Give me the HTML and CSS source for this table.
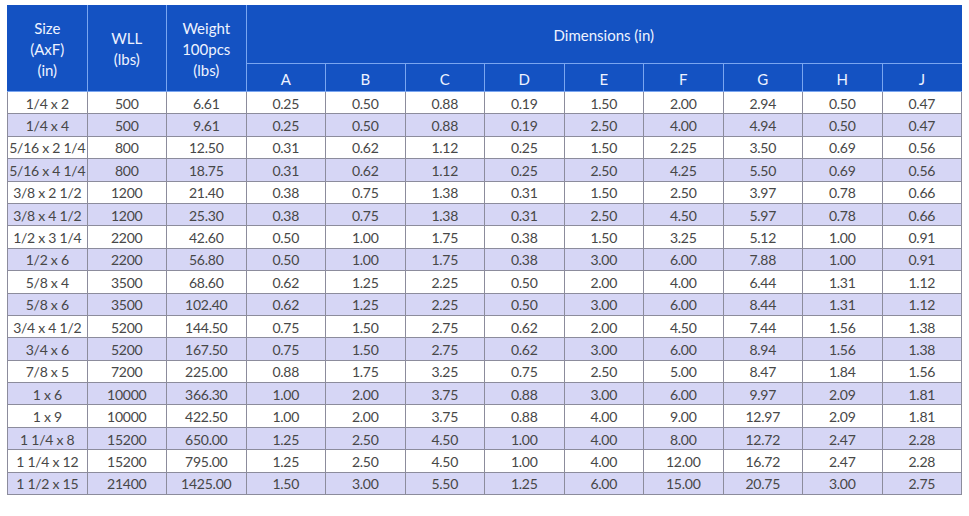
FILE: index.html
```html
<!DOCTYPE html>
<html>
<head>
<meta charset="utf-8">
<link rel="stylesheet" href="styles.css">
</head>
<body>
<table class="spec">
<colgroup>
<col><col><col><col><col><col><col><col><col><col><col><col>
</colgroup>
<thead>
<tr class="h1">
<th rowspan="2" class="stack">Size<br>(AxF)<br>(in)</th>
<th rowspan="2" class="stack">WLL<br>(lbs)</th>
<th rowspan="2" class="stack">Weight<br>100pcs<br>(lbs)</th>
<th colspan="9">Dimensions (in)</th>
</tr>
<tr class="h2">
<th>A</th><th>B</th><th>C</th><th>D</th><th>E</th><th>F</th><th>G</th><th>H</th><th>J</th>
</tr>
</thead>
<tbody>
<tr><td>1/4 x 2</td><td>500</td><td>6.61</td><td>0.25</td><td>0.50</td><td>0.88</td><td>0.19</td><td>1.50</td><td>2.00</td><td>2.94</td><td>0.50</td><td>0.47</td></tr>
<tr><td>1/4 x 4</td><td>500</td><td>9.61</td><td>0.25</td><td>0.50</td><td>0.88</td><td>0.19</td><td>2.50</td><td>4.00</td><td>4.94</td><td>0.50</td><td>0.47</td></tr>
<tr><td>5/16 x 2 1/4</td><td>800</td><td>12.50</td><td>0.31</td><td>0.62</td><td>1.12</td><td>0.25</td><td>1.50</td><td>2.25</td><td>3.50</td><td>0.69</td><td>0.56</td></tr>
<tr><td>5/16 x 4 1/4</td><td>800</td><td>18.75</td><td>0.31</td><td>0.62</td><td>1.12</td><td>0.25</td><td>2.50</td><td>4.25</td><td>5.50</td><td>0.69</td><td>0.56</td></tr>
<tr><td>3/8 x 2 1/2</td><td>1200</td><td>21.40</td><td>0.38</td><td>0.75</td><td>1.38</td><td>0.31</td><td>1.50</td><td>2.50</td><td>3.97</td><td>0.78</td><td>0.66</td></tr>
<tr><td>3/8 x 4 1/2</td><td>1200</td><td>25.30</td><td>0.38</td><td>0.75</td><td>1.38</td><td>0.31</td><td>2.50</td><td>4.50</td><td>5.97</td><td>0.78</td><td>0.66</td></tr>
<tr><td>1/2 x 3 1/4</td><td>2200</td><td>42.60</td><td>0.50</td><td>1.00</td><td>1.75</td><td>0.38</td><td>1.50</td><td>3.25</td><td>5.12</td><td>1.00</td><td>0.91</td></tr>
<tr><td>1/2 x 6</td><td>2200</td><td>56.80</td><td>0.50</td><td>1.00</td><td>1.75</td><td>0.38</td><td>3.00</td><td>6.00</td><td>7.88</td><td>1.00</td><td>0.91</td></tr>
<tr><td>5/8 x 4</td><td>3500</td><td>68.60</td><td>0.62</td><td>1.25</td><td>2.25</td><td>0.50</td><td>2.00</td><td>4.00</td><td>6.44</td><td>1.31</td><td>1.12</td></tr>
<tr><td>5/8 x 6</td><td>3500</td><td>102.40</td><td>0.62</td><td>1.25</td><td>2.25</td><td>0.50</td><td>3.00</td><td>6.00</td><td>8.44</td><td>1.31</td><td>1.12</td></tr>
<tr><td>3/4 x 4 1/2</td><td>5200</td><td>144.50</td><td>0.75</td><td>1.50</td><td>2.75</td><td>0.62</td><td>2.00</td><td>4.50</td><td>7.44</td><td>1.56</td><td>1.38</td></tr>
<tr><td>3/4 x 6</td><td>5200</td><td>167.50</td><td>0.75</td><td>1.50</td><td>2.75</td><td>0.62</td><td>3.00</td><td>6.00</td><td>8.94</td><td>1.56</td><td>1.38</td></tr>
<tr><td>7/8 x 5</td><td>7200</td><td>225.00</td><td>0.88</td><td>1.75</td><td>3.25</td><td>0.75</td><td>2.50</td><td>5.00</td><td>8.47</td><td>1.84</td><td>1.56</td></tr>
<tr><td>1 x 6</td><td>10000</td><td>366.30</td><td>1.00</td><td>2.00</td><td>3.75</td><td>0.88</td><td>3.00</td><td>6.00</td><td>9.97</td><td>2.09</td><td>1.81</td></tr>
<tr><td>1 x 9</td><td>10000</td><td>422.50</td><td>1.00</td><td>2.00</td><td>3.75</td><td>0.88</td><td>4.00</td><td>9.00</td><td>12.97</td><td>2.09</td><td>1.81</td></tr>
<tr><td>1 1/4 x 8</td><td>15200</td><td>650.00</td><td>1.25</td><td>2.50</td><td>4.50</td><td>1.00</td><td>4.00</td><td>8.00</td><td>12.72</td><td>2.47</td><td>2.28</td></tr>
<tr><td>1 1/4 x 12</td><td>15200</td><td>795.00</td><td>1.25</td><td>2.50</td><td>4.50</td><td>1.00</td><td>4.00</td><td>12.00</td><td>16.72</td><td>2.47</td><td>2.28</td></tr>
<tr><td>1 1/2 x 15</td><td>21400</td><td>1425.00</td><td>1.50</td><td>3.00</td><td>5.50</td><td>1.25</td><td>6.00</td><td>15.00</td><td>20.75</td><td>3.00</td><td>2.75</td></tr>
</tbody>
</table>
</body>
</html>
```
FILE: styles.css
```css
html, body {
  margin: 0;
  padding: 0;
  background: #ffffff;
}
body {
  padding: 5px 0 0 7px;
  font-family: "Lato", "Noto Sans", sans-serif;
}
.spec {
  border-collapse: collapse;
  table-layout: fixed;
  width: 954px;
  font-size: 14px;
  letter-spacing: -0.25px;
  color: #474747;
}
.spec col {
  width: 79.5px;
}
.spec th {
  background: #1452c2;
  color: #eef2ff;
  font-size: 15px;
  letter-spacing: 0;
  font-weight: 400;
  border: 1px solid #7aa6f0;
  padding: 0;
  line-height: 20px;
  text-align: center;
  vertical-align: middle;
  white-space: nowrap;
}
.spec th.stack {
  line-height: 21px;
  padding-top: 1px;
}
.spec thead tr:first-child th {
  border-top-color: #1452c2;
}
.spec thead tr:first-child th:first-child {
  border-left-color: #1452c2;
}
.spec thead tr:first-child th:last-child {
  border-right-color: #1452c2;
}
.spec thead tr.h2 th:last-child {
  border-right-color: #1452c2;
}
.spec .h1 th {
  height: 57px;
}
.spec .h2 th {
  height: 24px;
  line-height: 18px;
  padding-top: 3px;
}
.spec td {
  border: 1px solid #8c8c9c;
  height: 19.4px;
  padding: 2px 0 0;
  text-align: center;
  vertical-align: middle;
  line-height: 16px;
  white-space: nowrap;
}
.spec tbody tr:nth-child(even) td {
  background: #d6d6f5;
}
```
